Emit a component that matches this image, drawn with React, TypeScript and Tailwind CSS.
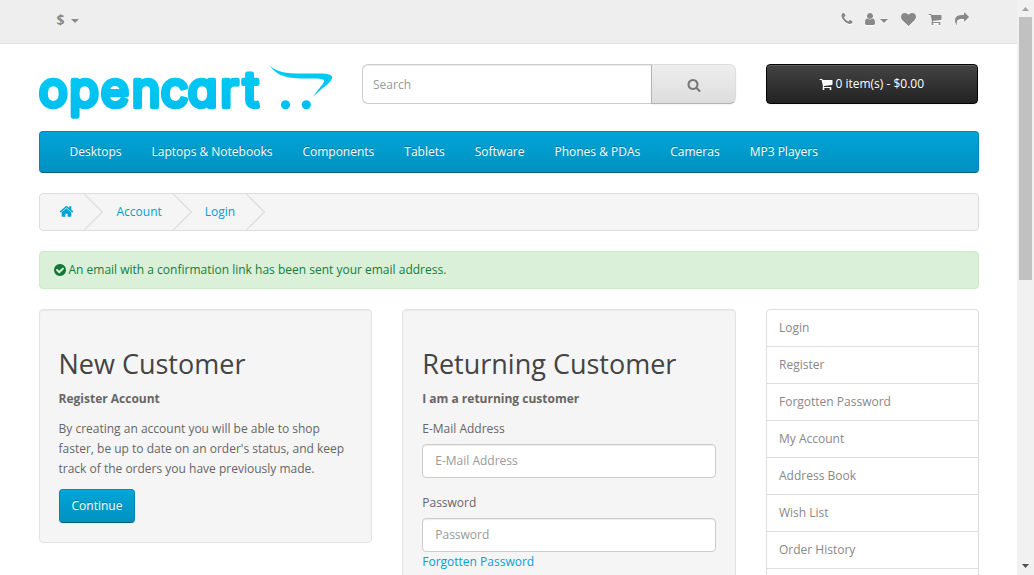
import React from 'react';

const icons = {
  phone:
    'M1600 1240q0 27-10 70.5t-21 68.5q-21 50-122 106-94 51-186 51-27 0-53-3.5t-57.5-12.5-47-14.5-55.5-20.5-49-18q-98-35-175-83-127-79-264-216t-216-264q-48-77-83-175-3-9-18-49t-20.5-55.5-14.5-47-12.5-57.5-3.5-53q0-92 51-186 56-101 106-122 25-11 68.5-21t70.5-10q14 0 21 3 18 6 53 76 11 19 30 54t35 63.5 31 53.5q3 4 17.5 25t21.5 35.5 7 28.5q0 20-28.5 50t-62 55-62 53-28.5 46q0 9 5 22.5t8.5 20.5 14 24 11.5 19q76 137 174 235t235 174q2 1 19 11.5t24 14 20.5 8.5 22.5 5q18 0 46-28.5t53-62 55-62 50-28.5q14 0 28.5 7t35.5 21.5 25 17.5q25 15 53.5 31t63.5 35 54 30q70 35 76 53 3 7 3 21z',
  user:
    'M1536 1399q0 109-62.5 187t-150.5 78h-854q-88 0-150.5-78t-62.5-187q0-85 8.5-160.5t31.5-152 58.5-131 94-89 134.5-34.5q131 128 313 128t313-128q76 0 134.5 34.5t94 89 58.5 131 31.5 152 8.5 160.5zm-256-887q0 159-112.5 271.5t-271.5 112.5-271.5-112.5-112.5-271.5 112.5-271.5 271.5-112.5 271.5 112.5 112.5 271.5z',
  heart:
    'M896 1664q-26 0-44-18l-624-602q-10-8-27.5-26t-55.5-65.5-68-97.5-53.5-121-23.5-138q0-220 127-344t351-124q62 0 126.5 21.5t120 58 95.5 68.5 76 68q36-36 76-68t95.5-68.5 120-58 126.5-21.5q224 0 351 124t127 344q0 221-229 450l-623 600q-18 18-44 18z',
  cart:
    'M704 1536q0 52-38 90t-90 38-90-38-38-90 38-90 90-38 90 38 38 90zm896 0q0 52-38 90t-90 38-90-38-38-90 38-90 90-38 90 38 38 90zm128-1088v512q0 24-16.5 42.5t-40.5 21.5l-1044 122q13 60 13 70 0 16-24 64h920q26 0 45 19t19 45-19 45-45 19h-1024q-26 0-45-19t-19-45q0-11 8-31.5t16-36 21.5-40 15.5-29.5l-177-823h-204q-26 0-45-19t-19-45 19-45 45-19h256q16 0 28.5 6.5t19.5 15.5 13 24.5 8 26 5.5 29.5 4.5 26h1201q26 0 45 19t19 45z',
  share:
    'M1792 640q0 26-19 45l-512 512q-19 19-45 19t-45-19-19-45v-256h-224q-98 0-175.5 6t-154 21.5-133 42.5-105.5 69.5-80 101-48.5 138.5-17.5 181q0 55 5 123 0 6 2.5 23.5t2.5 26.5q0 15-8.5 25t-23.5 10q-16 0-28-17-7-9-13-22t-13.5-30-10.5-24q-127-285-127-451 0-199 53-333 162-403 875-403h224v-256q0-26 19-45t45-19 45 19l512 512q19 19 19 45z',
  search:
    'M1216 832q0-185-131.5-316.5t-316.5-131.5-316.5 131.5-131.5 316.5 131.5 316.5 316.5 131.5 316.5-131.5 131.5-316.5zm512 832q0 52-38 90t-90 38q-54 0-90-38l-343-342q-179 124-399 124-143 0-273.5-55.5t-225-150-150-225-55.5-273.5 55.5-273.5 150-225 225-150 273.5-55.5 273.5 55.5 225 150 150 225 55.5 273.5q0 220-124 399l343 343q37 37 37 90z',
  home:
    'M1472 992v480q0 26-19 45t-45 19h-384v-384h-256v384h-384q-26 0-45-19t-19-45v-480q0-1 .5-3t.5-3l575-474 575 474q1 2 1 6zm223-69l-62 74q-8 9-21 11h-3q-13 0-21-7l-692-577-692 577q-12 8-24 7-13-2-21-11l-62-74q-8-10-7-23.5t11-21.5l719-599q32-26 76-26t76 26l244 204v-195q0-14 9-23t23-9h192q14 0 23 9t9 23v408l219 182q10 8 11 21.5t-7 23.5z',
  check:
    'M1412 734q0-28-18-46l-91-90q-19-19-45-19t-45 19l-408 407-226-226q-19-19-45-19t-45 19l-91 90q-18 18-18 46 0 27 18 45l362 362q19 19 45 19 27 0 46-19l543-543q18-18 18-45zm252 162q0 209-103 385.5t-279.5 279.5-385.5 103-385.5-103-279.5-279.5-103-385.5 103-385.5 279.5-279.5 385.5-103 385.5 103 279.5 279.5 103 385.5z',
};

function Icon({ name, className = 'h-[14px] w-[14px]' }: { name: keyof typeof icons; className?: string }) {
  return (
    <svg viewBox="0 0 1792 1792" className={`block shrink-0 fill-current ${className}`}>
      <path d={icons[name]} />
    </svg>
  );
}

function Caret({ className = '' }: { className?: string }) {
  return (
    <svg viewBox="0 0 8 4" className={`block h-1 w-2 shrink-0 fill-current ${className}`}>
      <path d="M0 0H8L4 4Z" />
    </svg>
  );
}

function Logo() {
  return (
    <svg viewBox="0 0 294 58" className="block h-[58px] w-[294px] overflow-visible">
      <defs>
        <linearGradient id="brand" x1="0" y1="0" x2="0" y2="58" gradientUnits="userSpaceOnUse">
          <stop offset="0" stopColor="#00cdf5" />
          <stop offset="1" stopColor="#00b9ec" />
        </linearGradient>
      </defs>
      <text
        x="-0.2 30.200 61.800 92.800 121.800 148.800 181.300 204"
        y="41.500"
        fill="url(#brand)"
        stroke="url(#brand)"
        strokeWidth="4.600"
        strokeLinejoin="round"
        className="font-['Inter',sans-serif] text-[48.500px] font-normal [font-feature-settings:'cv11']"
      >
        opencart
      </text>
      <g fill="url(#brand)">
        <path d="M230.500 0C237 7 247 8.500 262 8.500H281C290 8.500 294 10 293 13.500C291.500 19 281 24 274 32C278 25 285 19 285 16C285 13 277 13.500 265 13.500C246 13.500 237 10 230.500 0Z" />
        <circle cx="246.500" cy="39.800" r="4.600" />
        <circle cx="267.300" cy="39.800" r="4.600" />
      </g>
    </svg>
  );
}

function Chevron() {
  return (
    <svg viewBox="0 0 19 36" className="block h-9 w-[19px] shrink-0 fill-none stroke-[#ddd]">
      <path d="M.3 0L18.300 18L.3 36" strokeWidth="1.200" />
    </svg>
  );
}

function Field({ label, id, type }: { label: string; id: string; type: string }) {
  return (
    <div>
      <label htmlFor={id} className="mb-[5px] block leading-5">{label}</label>
      <input
        id={id}
        type={type}
        placeholder={label}
        className="block h-[34px] w-full rounded-[4px] border border-[#ccc] bg-white px-3 pb-[2px] text-[12px] shadow-[inset_0_1px_1px_rgba(0,0,0,0.075)] placeholder:text-[#999]"
      />
    </div>
  );
}

const categories = ['Desktops', 'Laptops & Notebooks', 'Components', 'Tablets', 'Software', 'Phones & PDAs', 'Cameras', 'MP3 Players'];
const accountLinks = ['Login', 'Register', 'Forgotten Password', 'My Account', 'Address Book', 'Wish List', 'Order History'];

export default function App() {
  return (
    <div className="flex h-[575px] w-[1034px] overflow-hidden bg-white font-['Open_Sans',sans-serif] text-[12px] leading-5 text-[#666]">
      <div className="h-full w-[1017px] shrink-0 overflow-hidden">
        <nav className="h-11 border-b border-[#e2e2e2] bg-[#eee] text-[#888]">
          <div className="mx-auto flex w-[940px] pt-[10px]">
            <button className="ml-[18px] flex items-center text-[14px] leading-5 font-bold [text-shadow:0_1px_#fff]">
              $<Caret className="mt-[2px] ml-[6.500px]" />
            </button>
            <div className="mr-[10px] ml-auto flex pt-[2px] [&_svg]:drop-shadow-[0_1px_0_#fff]">
              <Icon name="phone" />
              <Icon name="user" className="ml-[9.500px] h-[14px] w-[14px]" />
              <Caret className="mt-[7px] ml-[3px]" />
              <Icon name="heart" className="ml-[13px] h-[15px] w-[15px]" />
              <Icon name="cart" className="ml-[12px] h-[14px] w-[14px]" />
              <Icon name="share" className="ml-[12.500px] h-[14px] w-[14px]" />
            </div>
          </div>
        </nav>

        <div className="mx-auto w-[940px]">
          <header className="mt-5 flex h-[67px] items-start">
            <div className="w-[323.500px] shrink-0 pt-px">
              <Logo />
            </div>
            <div className="flex h-10 w-[374px] shrink-0">
              <input
                placeholder="Search"
                className="h-10 min-w-0 flex-1 rounded-l-[6px] border border-r-0 border-[#ccc] px-[10px] text-[12px] shadow-[inset_0_1px_1px_rgba(0,0,0,0.075)] placeholder:text-[#999]"
              />
              <button className="flex w-[85px] items-center justify-center rounded-r-[6px] border border-[#ddd] border-b-[#b3b3b3] border-l-[#b3b3b3] bg-linear-to-b from-[#eee] to-[#ddd] text-[#777] shadow-[0_1px_2px_rgba(0,0,0,0.05)]">
                <Icon name="search" className="mt-[2px] h-[14px] w-[14px]" />
              </button>
            </div>
            <button className="ml-[30px] flex h-10 w-[212px] items-center justify-center rounded-[4px] border border-[#040404] bg-linear-to-b from-[#444] to-[#222] text-white shadow-[inset_0_1px_0_rgba(255,255,255,0.15),0_1px_2px_rgba(0,0,0,0.05)]">
              <Icon name="cart" className="mr-[2.500px] -ml-px h-[14px] w-[14px]" />
              <span>0 item(s) - $0.00</span>
            </button>
          </header>

          <nav className="flex h-[42px] rounded-[4px] border bg-linear-to-b from-[#00a5d8] to-[#0091bf] pl-[15px] text-white [border-color:#0087b3_#0087b3_#006080]">
            {categories.map((item) => (
              <a key={item} className="px-[15px] py-[10px] leading-5 [text-shadow:0_-1px_0_rgba(0,0,0,0.25)]">{item}</a>
            ))}
          </nav>

          <div className="mt-5 flex h-[38px] items-center rounded-[4px] border border-[#ddd] bg-[#f5f5f5] text-[#00a1d6]">
            <Icon name="home" className="mr-[10px] mb-[2px] ml-[19.500px] h-[15px] w-[15px]" />
            <Chevron />
            <a className="mr-[11px] ml-[13.500px]">Account</a>
            <Chevron />
            <a className="mr-[11px] ml-[13px]">Login</a>
            <Chevron />
          </div>

          <div className="mt-5 flex h-[38px] items-center rounded-[4px] border border-[#c9edc7] bg-[#daf0d9] px-[14px] text-[#167c3d]">
            <Icon name="check" className="mr-[2px] mb-px -ml-px h-[14px] w-[14px] text-[#14773a]" />
            <p>An email with a confirmation link has been sent your email address.</p>
          </div>

          <main className="mt-5 flex items-start gap-[30px]">
            <section className="h-[234px] w-[333.750px] shrink-0 rounded-[4px] border border-[#e3e3e3] bg-[#f5f5f5] px-[19px] pt-[39px] shadow-[inset_0_1px_1px_rgba(0,0,0,0.05)]">
              <h2 className="mb-[10px] text-[27px] leading-[30px] text-[#444]">New Customer</h2>
              <p className="mb-[10px] font-bold">Register Account</p>
              <p className="mb-[10px]">
                By creating an account you will be able to shop faster, be up to date on an order's status, and keep track of the orders you have previously made.
              </p>
              <button className="h-[34px] rounded-[4px] border bg-linear-to-b from-[#00a5d8] to-[#0091bf] px-[12px] text-white shadow-[inset_0_1px_0_rgba(255,255,255,0.05),0_1px_2px_rgba(0,0,0,0.05)] [border-color:#0087b3_#0087b3_#006080] [text-shadow:0_-1px_0_rgba(0,0,0,0.25)]">
                Continue
              </button>
            </section>
            <section className="h-[330px] w-[333.750px] shrink-0 rounded-[4px] border border-[#e3e3e3] bg-[#f5f5f5] px-[19px] pt-[39px] shadow-[inset_0_1px_1px_rgba(0,0,0,0.05)]">
              <h2 className="mb-[10px] text-[27px] leading-[30px] text-[#444]">Returning Customer</h2>
              <p className="mb-[10px] font-bold">I am a returning customer</p>
              <div className="flex flex-col gap-[15px]">
                <Field id="email" type="text" label="E-Mail Address" />
                <Field id="password" type="password" label="Password" />
              </div>
              <a className="text-[#00a1d6]">Forgotten Password</a>
            </section>
            <aside className="h-[330px] flex-1 rounded-t-[4px] border border-[#ddd] text-[#888]">
              {accountLinks.map((item) => (
                <a key={item} className="block h-[37px] border-b border-[#ddd] px-3 py-2 leading-5">{item}</a>
              ))}
            </aside>
          </main>
        </div>
      </div>

      <div className="flex h-full w-[17px] shrink-0 flex-col items-center bg-[#f1f1f1]">
        <svg viewBox="0 0 17 17" className="block h-[17px] w-[17px] fill-[#a3a3a3]">
          <path d="M5 11L8.500 7L12 11Z" />
        </svg>
        <div className="h-[263px] w-[13px] bg-[#c1c1c1]" />
        <svg viewBox="0 0 17 17" className="mt-auto block h-[17px] w-[17px] fill-[#505050]">
          <path d="M5 6L8.500 10L12 6Z" />
        </svg>
      </div>
    </div>
  );
}
